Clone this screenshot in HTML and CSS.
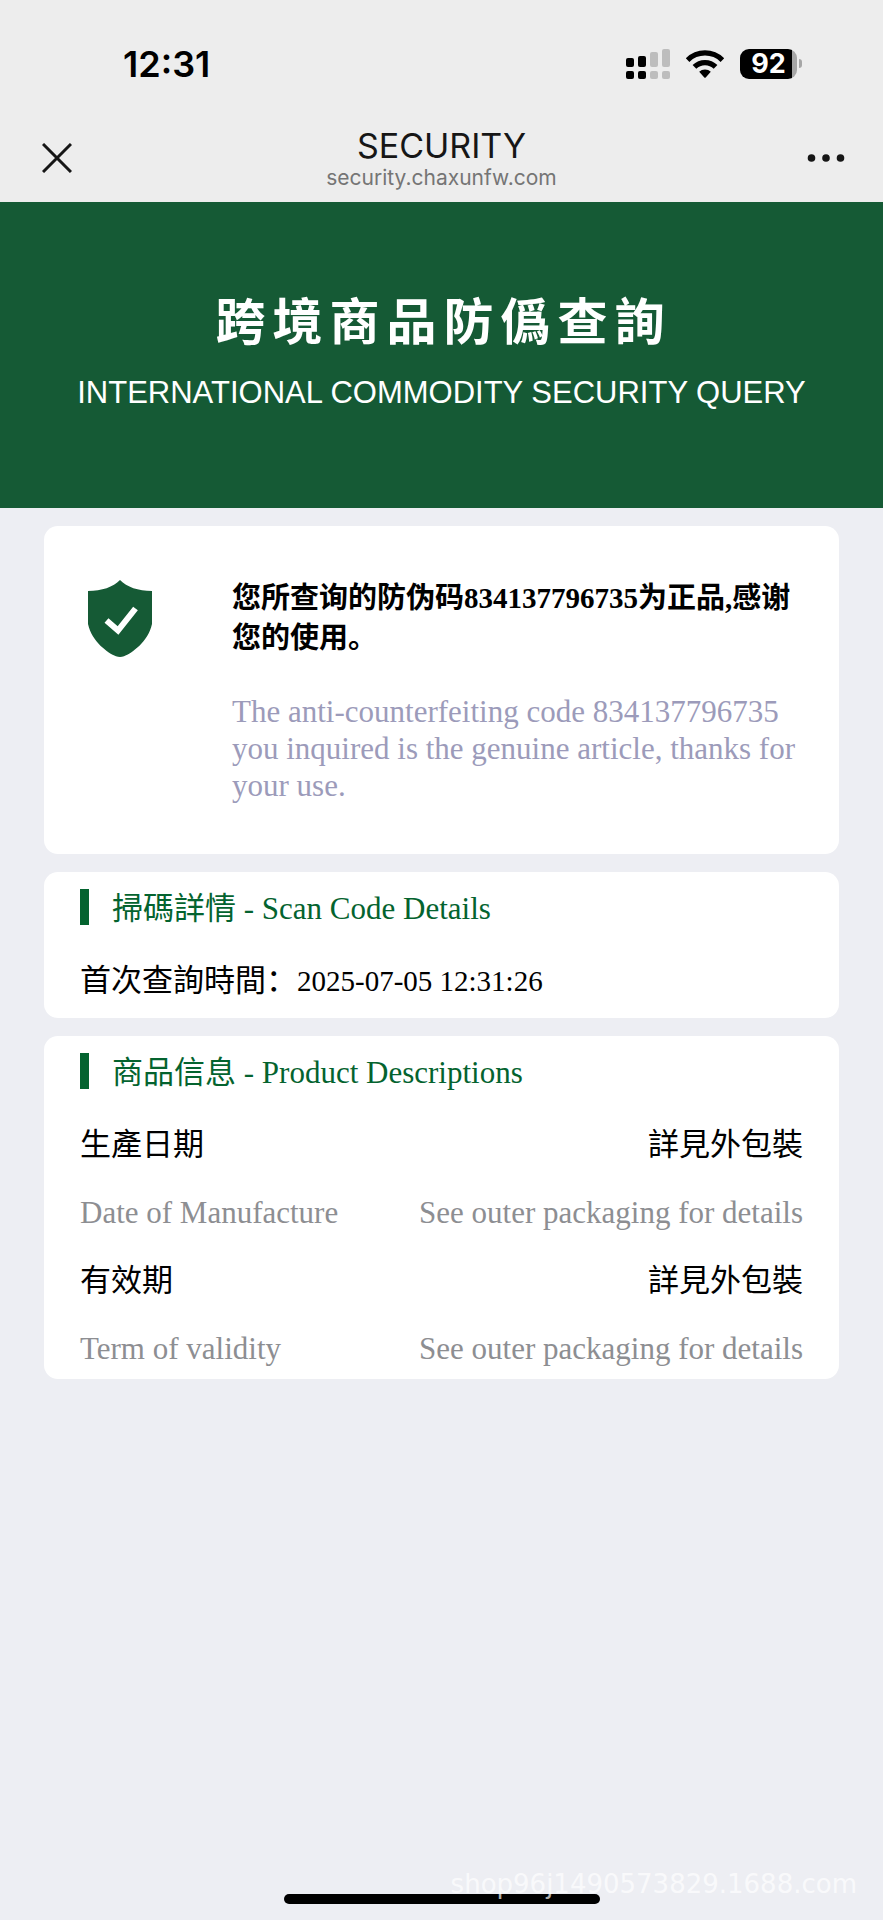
FILE: index.html
```html
<!DOCTYPE html>
<html lang="zh">
<head>
<meta charset="utf-8">
<meta name="viewport" content="width=device-width, initial-scale=1">
<title>SECURITY</title>
<link rel="stylesheet" href="styles.css">
</head>
<body>
<div class="screen">
  <header class="top">
    <div class="status">
      <time class="clock">12:31</time>
      <div class="indicators">
        <svg class="signal" viewBox="0 0 44 30" width="44" height="30" aria-hidden="true">
          <g fill="#000"><rect x="0" y="9" width="8" height="9" rx="2"/><rect x="12" y="7" width="8" height="11" rx="2"/><rect x="0" y="22" width="8" height="8" rx="2"/><rect x="12" y="22" width="8" height="8" rx="2"/></g>
          <g fill="#bdbdbd"><rect x="24" y="3" width="8" height="15" rx="2"/><rect x="36" y="0" width="8" height="18" rx="2"/><rect x="24" y="22" width="8" height="8" rx="2"/><rect x="36" y="22" width="8" height="8" rx="2"/></g>
        </svg>
        <svg class="wifi" viewBox="0 0 40 30" width="40" height="30" aria-hidden="true">
          <path d="M0.8 9.2 A27 27 0 0 1 39.2 9.2 L35.6 12.9 A22 22 0 0 0 4.4 12.9 Z"/>
          <path d="M7.6 16.1 A17.4 17.4 0 0 1 32.4 16.1 L28.7 19.8 A12.3 12.3 0 0 0 11.3 19.8 Z"/>
          <path d="M14.2 22.8 A8.2 8.2 0 0 1 25.8 22.8 L20.7 28.4 Q20 29.2 19.3 28.4 Z"/>
        </svg>
        <div class="battery"><span class="level">92</span><span class="tip"></span></div>
      </div>
    </div>
    <nav class="nav">
      <button class="icon-button" type="button" aria-label="Close">
        <svg viewBox="0 0 30 30" width="30" height="30"><path d="M1 1 29 29M29 1 1 29" fill="none" stroke="#161616" stroke-width="3"/></svg>
      </button>
      <div class="page-name">
        <h1 class="page-title">SECURITY</h1>
        <p class="page-url">security.chaxunfw.com</p>
      </div>
      <button class="icon-button" type="button" aria-label="More">
        <svg viewBox="0 0 38 8" width="38" height="8"><g fill="#161616"><circle cx="4.5" cy="4" r="3.8"/><circle cx="19" cy="4" r="3.8"/><circle cx="33.5" cy="4" r="3.8"/></g></svg>
      </button>
    </nav>
  </header>

  <section class="banner">
    <h2 class="banner-title">跨境商品防僞查詢</h2>
    <p class="banner-subtitle">INTERNATIONAL COMMODITY SECURITY QUERY</p>
  </section>

  <main class="cards">
    <section class="card result">
      <svg class="shield" viewBox="0 0 64 77" width="64" height="77" aria-hidden="true">
        <path fill="#155a35" d="M32 0 C39 7 50 11 64 11 V44 C60 62 44 73 36 76.300 Q32 77.500 28 76.300 C20 73 4 62 0 44 V11 C14 11 25 7 32 0 Z"/>
        <path fill="none" stroke="#fff" stroke-width="6" d="M18.500 40.500 30 50.500 47.500 28.500"/>
      </svg>
      <div class="result-text">
        <p class="result-zh">您所查询的防伪码834137796735为正品,感谢您的使用。</p>
        <p class="result-en">The anti-counterfeiting code 834137796735 you inquired is the genuine article, thanks for your use.</p>
      </div>
    </section>

    <section class="card scan">
      <h3 class="card-title">掃碼詳情 - Scan Code Details</h3>
      <p class="row row-start">首次查詢時間：<time class="stamp">2025-07-05 12:31:26</time></p>
    </section>

    <section class="card product">
      <h3 class="card-title">商品信息 - Product Descriptions</h3>
      <dl class="rows">
        <div class="row"><dt>生產日期</dt><dd>詳見外包裝</dd></div>
        <div class="row muted"><dt>Date of Manufacture</dt><dd>See outer packaging for details</dd></div>
        <div class="row"><dt>有效期</dt><dd>詳見外包裝</dd></div>
        <div class="row muted"><dt>Term of validity</dt><dd>See outer packaging for details</dd></div>
      </dl>
    </section>
  </main>

  <div class="home-bar"></div>
  <p class="watermark">shop96j1490573829.1688.com</p>
</div>
</body>
</html>
```
FILE: styles.css
```css
* { box-sizing: border-box; }

body, h1, h2, h3, p, dl, dd { margin: 0; }

body {
  background: #edeef3;
  color: #000;
  font-family: "Liberation Serif", "Noto Sans CJK SC", serif;
  font-size: 31px;
}

.screen {
  position: relative;
  display: flex;
  flex-direction: column;
  min-height: 100vh;
}

.top {
  background: #ededed;
  font-family: Inter, "Liberation Sans", sans-serif;
}

.status {
  display: flex;
  align-items: center;
  justify-content: space-between;
  height: 112px;
  padding: 15px 81px 0 123px;
}

.clock {
  font-size: 36px;
  font-weight: 600;
}

.indicators {
  display: flex;
  align-items: center;
  gap: 15px;
}

.wifi { fill: #000; }

.battery {
  display: flex;
  align-items: center;
  gap: 2px;
}

.level {
  width: 57px;
  height: 30px;
  border-radius: 9px;
  background: linear-gradient(to right, #000 52px, #a6a6a6 52px);
  color: #fff;
  font-size: 27px;
  font-weight: 700;
  line-height: 30px;
  text-align: center;
}

.tip {
  width: 3px;
  height: 9px;
  border-radius: 0 4px 4px 0;
  background: #a6a6a6;
}

.nav {
  display: flex;
  align-items: center;
  justify-content: space-between;
  height: 90px;
  padding: 2px 37px 0;
}

.icon-button {
  display: flex;
  align-items: center;
  justify-content: center;
  width: 40px;
  height: 40px;
  padding: 0;
  border: 0;
  background: none;
}

.page-name { text-align: center; }

.page-title {
  color: #161616;
  font-size: 34px;
  font-weight: 400;
  line-height: 40px;
}

.page-url {
  color: #757575;
  font-size: 21px;
  line-height: 24px;
}

.banner {
  display: flex;
  flex-direction: column;
  align-items: center;
  gap: 22px;
  height: 306px;
  padding-top: 83px;
  background: #155a35;
  color: #fff;
  white-space: nowrap;
}

.banner-title {
  padding-left: 4px;
  font-family: "Noto Sans CJK SC", sans-serif;
  font-size: 50px;
  font-weight: 700;
  letter-spacing: 7px;
  line-height: 66px;
}

.banner-subtitle {
  font-family: "Liberation Sans", sans-serif;
  font-size: 31px;
  line-height: 40px;
}

.cards {
  display: flex;
  flex-direction: column;
  gap: 18px;
  padding: 18px 44px;
}

.card {
  border-radius: 14px;
  background: #fff;
}

.result {
  display: flex;
  align-items: flex-start;
  gap: 80px;
  padding: 52px 36px 50px 44px;
}

.shield {
  flex: none;
  margin-top: 2px;
}

.result-text {
  display: flex;
  flex-direction: column;
  gap: 35px;
}

.result-zh {
  font-size: 29px;
  font-weight: 700;
  line-height: 40px;
}

.result-en {
  color: #9c9bba;
  line-height: 37px;
}

.scan { padding: 17px 36px 13px; }

.product { padding: 17px 36px 6px; }

.card-title {
  margin-bottom: 32px;
  padding: 4px 0 0 23px;
  border-left: 9px solid #04632f;
  color: #04632f;
  font-size: 31px;
  font-weight: 400;
  line-height: 32px;
}

.rows {
  display: flex;
  flex-direction: column;
  gap: 20px;
}

.row {
  display: flex;
  align-items: center;
  justify-content: space-between;
  line-height: 48px;
}

.row-start { justify-content: flex-start; }

.stamp { font-size: 29px; }

.muted { color: #8d8e92; }

.home-bar {
  align-self: center;
  width: 316px;
  height: 10px;
  margin: auto 0 16px;
  border-radius: 5px;
  background: #000;
}

.watermark {
  position: absolute;
  right: 26px;
  bottom: 18px;
  color: rgba(255, 255, 255, 0.7);
  font-family: "DejaVu Sans", sans-serif;
  font-size: 26px;
  line-height: 36px;
}
```
